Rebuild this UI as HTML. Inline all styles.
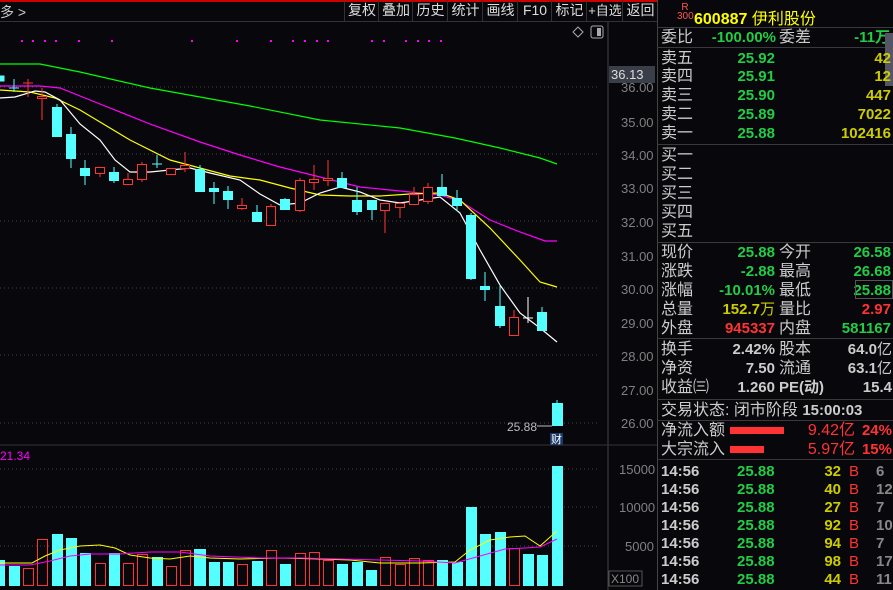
<!DOCTYPE html>
<html><head><meta charset="utf-8"><style>
body{margin:0;width:893px;height:590px;background:#08080c;overflow:hidden;font-family:"Liberation Sans","Noto Sans CJK SC",sans-serif;position:relative}
.a{position:absolute;white-space:nowrap}
.tb{position:absolute;top:0;height:21px;line-height:21px;color:#ddd;font-size:14px;text-align:center;border-left:1px solid #333;white-space:nowrap;overflow:hidden}
.l{position:absolute;left:661px;color:#ccc;font-size:16px;line-height:19px}
.r{position:absolute;font-weight:bold;font-size:15px;text-align:right;line-height:18px}
.hl{position:absolute;left:657px;width:236px;height:1px;background:#3a3a3a}
</style></head><body>
<div class="a" style="left:0;top:0;width:657px;height:2px;background:#c00"></div>
<div class="a" style="left:0;top:21px;width:657px;height:1px;background:#333"></div>
<div class="a" style="left:0;top:2px;color:#ccc;font-size:14px">多 &gt;</div>
<div class="tb" style="left:344px;width:34px">复权</div>
<div class="tb" style="left:378px;width:34px">叠加</div>
<div class="tb" style="left:412px;width:35px">历史</div>
<div class="tb" style="left:447px;width:35px">统计</div>
<div class="tb" style="left:482px;width:35px">画线</div>
<div class="tb" style="left:517px;width:34px">F10</div>
<div class="tb" style="left:551px;width:35px">标记</div>
<div class="tb" style="left:586px;width:36px;font-size:13px">+自选</div>
<div class="tb" style="left:622px;width:35px">返回</div>
<div class="a" style="left:657px;top:0;width:1px;height:590px;background:#444"></div>

<svg class="a" style="left:0;top:0" width="657" height="590">
<line x1="608" y1="22" x2="608" y2="590" stroke="#444"/>
<line x1="0" y1="445" x2="657" y2="445" stroke="#333"/>
<g stroke="#444" stroke-dasharray="1,3">
<line x1="0" y1="87" x2="600" y2="87"/><line x1="0" y1="154" x2="600" y2="154"/><line x1="0" y1="221" x2="600" y2="221"/><line x1="0" y1="288" x2="600" y2="288"/><line x1="0" y1="355" x2="600" y2="355"/><line x1="0" y1="423" x2="600" y2="423"/>
<line x1="0" y1="469" x2="600" y2="469"/><line x1="0" y1="507" x2="600" y2="507"/><line x1="0" y1="546" x2="600" y2="546"/>
</g>
<g fill="#808080" font-size="13" font-family="Liberation Sans">
<text x="621" y="92">36.00</text><text x="621" y="127">35.00</text><text x="621" y="160">34.00</text><text x="621" y="193">33.00</text><text x="621" y="227">32.00</text><text x="621" y="261">31.00</text><text x="621" y="294">30.00</text><text x="621" y="328">29.00</text><text x="621" y="361">28.00</text><text x="621" y="395">27.00</text><text x="621" y="428">26.00</text>
<text x="619" y="474">15000</text><text x="619" y="512">10000</text><text x="625" y="551">5000</text>
</g>
<rect x="609" y="66" width="46" height="17" fill="#3a3e48"/>
<text x="611" y="79" fill="#ddd" font-size="13" font-family="Liberation Sans">36.13</text>
<rect x="609" y="571" width="33" height="15" fill="none" stroke="#555"/>
<text x="611" y="583" fill="#888" font-size="12" font-family="Liberation Sans">X100</text>
<path d="M578 27l5 5-5 5-5-5z" fill="none" stroke="#aaa"/>
<rect x="591" y="26" width="12" height="12" fill="none" stroke="#aaa" rx="2"/><rect x="597" y="28" width="4" height="8" fill="#aaa"/>
<g fill="#f0f">
<rect x="21" y="40" width="2" height="2"/><rect x="32" y="40" width="2" height="2"/><rect x="44" y="40" width="2" height="2"/><rect x="55" y="40" width="2" height="2"/><rect x="78" y="40" width="2" height="2"/><rect x="111" y="40" width="2" height="2"/><rect x="191" y="40" width="2" height="2"/><rect x="236" y="40" width="2" height="2"/><rect x="270" y="40" width="2" height="2"/><rect x="292" y="40" width="2" height="2"/><rect x="304" y="40" width="2" height="2"/><rect x="316" y="40" width="2" height="2"/><rect x="327" y="40" width="2" height="2"/><rect x="371" y="40" width="2" height="2"/><rect x="383" y="40" width="2" height="2"/><rect x="405" y="40" width="2" height="2"/><rect x="417" y="40" width="2" height="2"/><rect x="428" y="40" width="2" height="2"/><rect x="440" y="40" width="2" height="2"/>
</g>
<g fill="none" stroke-width="1.2">
<polyline stroke="#0f0" points="0,64 40,64 80,72 150,88 250,106 320,120 400,128 455,138 500,148 540,158 557,164"/>
<polyline stroke="#f0f" points="0,86 40,86 60,88 100,104 150,124 200,142 240,155 280,167 320,177 360,187 400,191 440,195 460,201 490,220 520,232 545,241 557,241"/>
<polyline stroke="#ff0" points="0,90 30,92 55,98 80,110 100,122 130,140 170,160 200,168 230,176 260,180 290,188 320,195 350,196 380,196 410,194 440,193 460,200 490,228 520,260 540,282 557,287"/>
<polyline stroke="#fff" points="0,98 15,97 35,91 45,92 60,100 80,124 100,140 115,160 130,172 150,172 170,170 190,168 210,173 240,180 260,194 280,205 300,203 320,193 340,187 360,192 380,200 400,203 420,200 440,197 460,213 480,250 500,285 520,313 540,328 557,342"/>
</g>
<g stroke="#5ff" fill="#5ff">
<rect x="0" y="76" width="4" height="5"/>
<line x1="14" y1="79" x2="14" y2="92"/><line x1="9" y1="88" x2="19" y2="88"/>
<line x1="57" y1="104" x2="57" y2="137"/><rect x="52.5" y="107.5" width="9" height="29"/>
<line x1="71" y1="127" x2="71" y2="168"/><rect x="66.5" y="134.5" width="9" height="24"/>
<line x1="85" y1="160" x2="85" y2="185"/><rect x="80.5" y="168.5" width="9" height="7"/>
<line x1="114" y1="167" x2="114" y2="183"/><rect x="109.5" y="172.5" width="9" height="8"/>
<line x1="157" y1="155" x2="157" y2="168"/><line x1="152" y1="164" x2="162" y2="164"/>
<line x1="200" y1="165" x2="200" y2="192"/><rect x="195.5" y="169.5" width="9" height="22"/>
<line x1="214" y1="182" x2="214" y2="204"/><rect x="209.5" y="188.5" width="9" height="3"/>
<line x1="228" y1="186" x2="228" y2="209"/><rect x="223.5" y="191.5" width="9" height="8"/>
<line x1="257" y1="205" x2="257" y2="221"/><rect x="252.5" y="212.5" width="9" height="9"/>
<line x1="285" y1="198" x2="285" y2="209"/><rect x="280.5" y="199.5" width="9" height="10"/>
<line x1="342" y1="172" x2="342" y2="187"/><rect x="337.5" y="178.5" width="9" height="9"/>
<line x1="357" y1="187" x2="357" y2="215"/><rect x="352.5" y="200.5" width="9" height="11"/>
<line x1="372" y1="200" x2="372" y2="220"/><rect x="367.5" y="200.5" width="9" height="9"/>
<line x1="442" y1="174" x2="442" y2="195"/><rect x="437.5" y="187.5" width="9" height="8"/>
<line x1="457" y1="190" x2="457" y2="211"/><rect x="452.5" y="198.5" width="9" height="7"/>
<line x1="471" y1="213" x2="471" y2="280"/><rect x="466.5" y="215.5" width="9" height="63"/>
<line x1="485" y1="272" x2="485" y2="301"/><rect x="480.5" y="286.5" width="9" height="3"/>
<line x1="500" y1="285" x2="500" y2="328"/><rect x="495.5" y="306.5" width="9" height="19"/>
<line x1="542" y1="307" x2="542" y2="331"/><rect x="537.5" y="312.5" width="9" height="18"/>
<line x1="557" y1="400" x2="557" y2="426"/><rect x="552.5" y="403.5" width="10" height="22"/>
</g>
<g stroke="#f33" fill="#08080c">
<line x1="28" y1="79" x2="28" y2="97"/><line x1="23" y1="83" x2="33" y2="83"/>
<line x1="42" y1="88" x2="42" y2="120"/><rect x="37.5" y="96.5" width="9" height="2"/>
<line x1="100" y1="173" x2="100" y2="177"/><rect x="95.5" y="167.5" width="9" height="6"/>
<line x1="128" y1="173" x2="128" y2="185"/><rect x="123.5" y="179.5" width="9" height="5"/>
<line x1="142" y1="162" x2="142" y2="182"/><rect x="137.5" y="164.5" width="9" height="15"/>
<rect x="166.5" y="168.5" width="9" height="6"/>
<line x1="185" y1="152" x2="185" y2="172"/><rect x="180.5" y="165.5" width="9" height="3"/>
<line x1="242" y1="198" x2="242" y2="210"/><rect x="237.5" y="205.5" width="9" height="3"/>
<line x1="271" y1="204" x2="271" y2="226"/><rect x="266.5" y="206.5" width="9" height="19"/>
<line x1="300" y1="178" x2="300" y2="212"/><rect x="295.5" y="180.5" width="9" height="30"/>
<line x1="314" y1="165" x2="314" y2="190"/><rect x="309.5" y="179.5" width="9" height="3"/>
<line x1="328" y1="160" x2="328" y2="186"/><rect x="323.5" y="178.5" width="9" height="2"/>
<line x1="385" y1="203" x2="385" y2="233"/><rect x="380.5" y="203.5" width="9" height="7"/>
<line x1="400" y1="203" x2="400" y2="218"/><rect x="395.5" y="203.5" width="9" height="4"/>
<line x1="414" y1="187" x2="414" y2="204"/><rect x="409.5" y="194.5" width="9" height="10"/>
<line x1="428" y1="183" x2="428" y2="204"/><rect x="423.5" y="187.5" width="9" height="14"/>
<line x1="514" y1="310" x2="514" y2="317"/><rect x="509.5" y="317.5" width="9" height="18"/>
</g>
<line x1="528" y1="297" x2="528" y2="323" stroke="#fff"/><line x1="523" y1="318" x2="533" y2="318" stroke="#fff"/>
<text x="507" y="431" fill="#bbb" font-size="12" font-family="Liberation Sans">25.88</text>
<line x1="537" y1="426" x2="552" y2="426" stroke="#bbb"/>
<rect x="550" y="433" width="13" height="12" fill="#1a3a6a"/>
<text x="551" y="443" fill="#fff" font-size="11" font-family="Noto Sans CJK SC">财</text>
<text x="0" y="460" fill="#f0f" font-size="12" font-family="Liberation Sans">21.34</text>
<g fill="#5ff">
<rect x="0" y="560" width="5" height="26"/><rect x="9" y="566" width="11" height="20"/><rect x="52" y="534" width="11" height="52"/><rect x="66" y="538" width="11" height="48"/><rect x="80" y="553" width="11" height="33"/><rect x="109" y="553" width="11" height="33"/><rect x="152" y="557" width="11" height="29"/><rect x="194" y="549" width="12" height="37"/><rect x="209" y="562" width="11" height="24"/><rect x="223" y="562" width="11" height="24"/><rect x="252" y="561" width="11" height="25"/><rect x="280" y="564" width="11" height="22"/><rect x="337" y="564" width="11" height="22"/><rect x="352" y="562" width="11" height="24"/><rect x="366" y="570" width="11" height="16"/><rect x="437" y="560" width="11" height="26"/><rect x="452" y="562" width="11" height="24"/><rect x="466" y="507" width="11" height="79"/><rect x="480" y="534" width="11" height="52"/><rect x="495" y="532" width="11" height="54"/><rect x="523" y="554" width="11" height="32"/><rect x="537" y="555" width="11" height="31"/><rect x="552" y="466" width="11" height="120"/>
</g>
<g fill="none" stroke="#f33">
<rect x="23.5" y="568.5" width="10" height="17"/><rect x="37.5" y="539.5" width="10" height="46"/><rect x="95.5" y="563.5" width="10" height="22"/><rect x="123.5" y="563.5" width="10" height="22"/><rect x="137.5" y="554.5" width="10" height="31"/><rect x="166.5" y="566.5" width="10" height="19"/><rect x="180.5" y="550.5" width="10" height="35"/><rect x="237.5" y="564.5" width="10" height="21"/><rect x="266.5" y="550.5" width="10" height="35"/><rect x="295.5" y="553.5" width="10" height="32"/><rect x="309.5" y="552.5" width="10" height="33"/><rect x="323.5" y="560.5" width="10" height="25"/><rect x="380.5" y="557.5" width="10" height="28"/><rect x="395.5" y="564.5" width="10" height="21"/><rect x="409.5" y="558.5" width="10" height="27"/><rect x="423.5" y="560.5" width="10" height="25"/><rect x="509.5" y="548.5" width="10" height="37"/>
</g>
<polyline fill="none" stroke="#ff0" points="0,563 20,563 32,563 45,556 60,550 80,546 100,545 115,548 130,555 150,558 170,559 190,556 210,558 240,559 280,558 320,559 350,560 380,563 420,563 455,562 470,550 490,540 510,537 525,536 540,546 557,531"/>
<polyline fill="none" stroke="#f0f" points="0,565 30,565 50,561 70,556 90,554 120,554 150,552 180,552 210,556 260,558 300,558 340,559 380,560 420,561 455,563 480,556 505,549 525,548 540,547 557,539"/>
</svg>

<div class="a" style="left:677px;top:3px;color:#f55;font-size:10px;line-height:9px;text-align:center;width:16px">R<br>300</div>
<div class="a" style="left:694px;top:5px;color:#ff0;font-size:16px;font-weight:bold">600887 <span style="font-weight:normal">伊利股份</span></div>
<div class="hl" style="top:27px"></div>
<div class="hl" style="top:47px"></div>
<div class="hl" style="top:144px"></div>
<div class="hl" style="top:242px"></div>
<div class="hl" style="top:338px"></div>
<div class="hl" style="top:399px"></div>
<div class="hl" style="top:420px"></div>
<div class="hl" style="top:459px"></div>

<div class="l" style="top:28px">委比</div><div class="r" style="left:700px;width:76px;top:29px;color:#2c4">-100.00%</div>
<div class="l" style="left:779px;top:28px">委差</div><div class="r" style="left:830px;width:60px;top:29px;color:#2c4">-11万</div>
<div class="a" style="left:885px;top:33px;width:8px;height:53px;background:#556"></div>

<div class="l" style="top:49px">卖五</div><div class="r" style="left:700px;width:75px;top:50px;color:#2c4">25.92</div><div class="r" style="left:800px;width:91px;top:50px;color:#cc0">42</div>
<div class="l" style="top:67px">卖四</div><div class="r" style="left:700px;width:75px;top:68px;color:#2c4">25.91</div><div class="r" style="left:800px;width:91px;top:68px;color:#cc0">12</div>
<div class="l" style="top:86px">卖三</div><div class="r" style="left:700px;width:75px;top:87px;color:#2c4">25.90</div><div class="r" style="left:800px;width:91px;top:87px;color:#cc0">447</div>
<div class="l" style="top:105px">卖二</div><div class="r" style="left:700px;width:75px;top:106px;color:#2c4">25.89</div><div class="r" style="left:800px;width:91px;top:106px;color:#cc0">7022</div>
<div class="l" style="top:124px">卖一</div><div class="r" style="left:700px;width:75px;top:125px;color:#2c4">25.88</div><div class="r" style="left:800px;width:91px;top:125px;color:#cc0">102416</div>
<div class="l" style="top:146px">买一</div><div class="l" style="top:165px">买二</div><div class="l" style="top:184px">买三</div><div class="l" style="top:203px">买四</div><div class="l" style="top:222px">买五</div>

<div class="l" style="top:243px">现价</div><div class="r" style="left:700px;width:75px;top:244px;color:#2c4">25.88</div><div class="l" style="left:779px;top:243px">今开</div><div class="r" style="left:800px;width:91px;top:244px;color:#2c4">26.58</div>
<div class="l" style="top:262px">涨跌</div><div class="r" style="left:700px;width:75px;top:263px;color:#2c4">-2.88</div><div class="l" style="left:779px;top:262px">最高</div><div class="r" style="left:800px;width:91px;top:263px;color:#2c4">26.68</div>
<div class="l" style="top:281px">涨幅</div><div class="r" style="left:700px;width:75px;top:282px;color:#2c4">-10.01%</div><div class="l" style="left:779px;top:281px">最低</div><div class="r" style="left:800px;width:91px;top:282px;color:#2c4">25.88</div>
<div class="a" style="left:855px;top:280px;width:36px;height:17px;border:1px solid #555"></div>
<div class="l" style="top:300px">总量</div><div class="r" style="left:700px;width:75px;top:301px;color:#cc0">152.7<span style="font-weight:normal">万</span></div><div class="l" style="left:779px;top:300px">量比</div><div class="r" style="left:800px;width:91px;top:301px;color:#f33">2.97</div>
<div class="l" style="top:319px">外盘</div><div class="r" style="left:700px;width:75px;top:320px;color:#f33">945337</div><div class="l" style="left:779px;top:319px">内盘</div><div class="r" style="left:800px;width:91px;top:320px;color:#2c4">581167</div>

<div class="l" style="top:340px">换手</div><div class="r" style="left:700px;width:75px;top:341px;color:#ccc">2.42%</div><div class="l" style="left:779px;top:340px">股本</div><div class="r" style="left:800px;width:92px;top:341px;color:#ccc">64.0<span style="font-weight:normal">亿</span></div>
<div class="l" style="top:359px">净资</div><div class="r" style="left:700px;width:75px;top:360px;color:#ccc">7.50</div><div class="l" style="left:779px;top:359px">流通</div><div class="r" style="left:800px;width:92px;top:360px;color:#ccc">63.1<span style="font-weight:normal">亿</span></div>
<div class="l" style="top:378px">收益㈢</div><div class="r" style="left:700px;width:75px;top:379px;color:#ccc">1.260</div><div class="l" style="left:779px;top:378px;font-weight:bold;font-size:15px">PE(动)</div><div class="r" style="left:800px;width:92px;top:379px;color:#ccc">15.4</div>

<div class="l" style="top:401px">交易状态: 闭市阶段 <b style="font-size:15px">15:00:03</b></div>
<div class="l" style="top:421px">净流入额</div><div class="a" style="left:730px;top:427px;width:54px;height:7px;background:#f33"></div><div class="r" style="left:790px;width:65px;top:422px;color:#f33;font-weight:normal;font-size:16px">9.42亿</div><div class="r" style="left:855px;width:37px;top:422px;color:#f33">24%</div>
<div class="l" style="top:440px">大宗流入</div><div class="a" style="left:730px;top:446px;width:34px;height:7px;background:#f33"></div><div class="r" style="left:790px;width:65px;top:441px;color:#f33;font-weight:normal;font-size:16px">5.97亿</div><div class="r" style="left:855px;width:37px;top:441px;color:#f33">15%</div>

<div style="position:absolute;left:661px;top:463px;font-weight:bold;font-size:15px;line-height:18px">
<div style="position:relative;height:18px"><span class="a" style="color:#ccc">14:56</span><span class="a" style="left:76px;color:#2c4">25.88</span><span class="a" style="left:140px;width:40px;text-align:right;color:#cc0">32</span><span class="a" style="left:188px;color:#f33;font-weight:normal">B</span><span class="a" style="left:215px;color:#888">6</span></div>
<div style="position:relative;height:18px"><span class="a" style="color:#ccc">14:56</span><span class="a" style="left:76px;color:#2c4">25.88</span><span class="a" style="left:140px;width:40px;text-align:right;color:#cc0">40</span><span class="a" style="left:188px;color:#f33;font-weight:normal">B</span><span class="a" style="left:215px;color:#888">12</span></div>
<div style="position:relative;height:18px"><span class="a" style="color:#ccc">14:56</span><span class="a" style="left:76px;color:#2c4">25.88</span><span class="a" style="left:140px;width:40px;text-align:right;color:#cc0">27</span><span class="a" style="left:188px;color:#f33;font-weight:normal">B</span><span class="a" style="left:215px;color:#888">7</span></div>
<div style="position:relative;height:18px"><span class="a" style="color:#ccc">14:56</span><span class="a" style="left:76px;color:#2c4">25.88</span><span class="a" style="left:140px;width:40px;text-align:right;color:#cc0">92</span><span class="a" style="left:188px;color:#f33;font-weight:normal">B</span><span class="a" style="left:215px;color:#888">10</span></div>
<div style="position:relative;height:18px"><span class="a" style="color:#ccc">14:56</span><span class="a" style="left:76px;color:#2c4">25.88</span><span class="a" style="left:140px;width:40px;text-align:right;color:#cc0">94</span><span class="a" style="left:188px;color:#f33;font-weight:normal">B</span><span class="a" style="left:215px;color:#888">7</span></div>
<div style="position:relative;height:18px"><span class="a" style="color:#ccc">14:56</span><span class="a" style="left:76px;color:#2c4">25.88</span><span class="a" style="left:140px;width:40px;text-align:right;color:#cc0">98</span><span class="a" style="left:188px;color:#f33;font-weight:normal">B</span><span class="a" style="left:215px;color:#888">17</span></div>
<div style="position:relative;height:18px"><span class="a" style="color:#ccc">14:56</span><span class="a" style="left:76px;color:#2c4">25.88</span><span class="a" style="left:140px;width:40px;text-align:right;color:#cc0">44</span><span class="a" style="left:188px;color:#f33;font-weight:normal">B</span><span class="a" style="left:215px;color:#888">11</span></div>
</div>
</body></html>
